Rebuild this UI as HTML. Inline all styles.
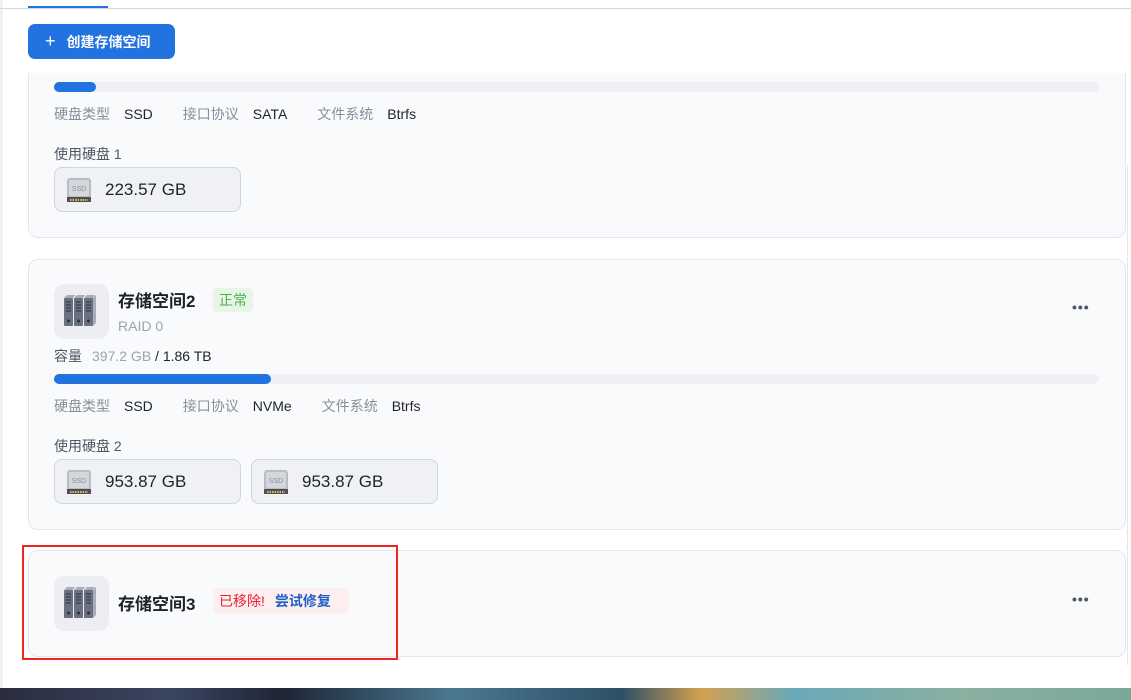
<!DOCTYPE html>
<html><head><meta charset="utf-8"><style>
*{box-sizing:border-box;margin:0;padding:0}
body{width:1131px;height:700px;overflow:hidden;background:#fff;font-family:"Liberation Sans","Noto Sans CJK SC",sans-serif;position:relative;color:#1f2329}
.abs{position:absolute}
.card{position:absolute;left:28px;width:1098px;background:#f9fafc;border:1px solid #e2e6ed;border-radius:10px}
.lbl{color:#86909c;font-size:14px}
.val{color:#1f2329;font-size:14px}
.bar{position:absolute;left:54px;width:1045px;height:10px;background:#eef0f3;border-radius:5px}
.bar i{display:block;height:10px;background:#2272e0;border-radius:5px}
.disk{position:absolute;width:187px;height:45px;background:#eff1f4;border:1px solid #d2d6dc;border-radius:8px}
.disk span{position:absolute;left:50px;top:12px;font-size:17px;color:#1f2329}
.ico{position:absolute;width:55px;height:55px;background:#eceef2;border-radius:10px}
.dots{position:absolute;font-size:14px;letter-spacing:1px;color:#4e5563;font-weight:bold}
.row span.val{margin-left:14px}
.row span.lbl{margin-left:30px}
.row span.lbl:first-child{margin-left:0}
</style></head><body>
<div class="abs" style="left:0;top:0;width:3px;height:700px;background:#eef1f5"></div>
<div class="abs" style="left:0;top:8px;width:1131px;height:1px;background:#cfd8e3"></div>
<div class="abs" style="left:28px;top:6px;width:80px;height:2px;background:#2272e0"></div>
<div class="abs" style="left:1127px;top:165px;width:1px;height:500px;background:#e2e6ed"></div>
<div class="abs" style="left:28px;top:24px;width:147px;height:35px;background:#2272e0;border-radius:7px;color:#fff;font-size:14px;font-weight:bold;line-height:35px;padding-left:17px"><span style="font-weight:normal;font-size:18px;margin-right:11px">+</span>创建存储空间</div>

<svg width="0" height="0" style="position:absolute"><defs>
<g id="ssd"><rect x="0" y="0" width="24" height="24" rx="3" fill="#b8bcc4"/><rect x="2" y="2" width="20" height="16" rx="2" fill="#d4d7dc"/><text x="12" y="13" font-size="7" text-anchor="middle" fill="#8a8f98" font-family="Liberation Sans">SSD</text><rect x="0" y="19" width="24" height="5" fill="#4b5060"/><path d="M3 22h18" stroke="#e8b93a" stroke-width="2" stroke-dasharray="1.5 1"/></g>
<g id="srv"><g fill="#6b7080"><rect x="0" y="4" width="9" height="28" rx="1"/><rect x="10" y="4" width="9" height="28" rx="1"/><rect x="20" y="4" width="9" height="28" rx="1"/></g><g fill="#a9adb8"><path d="M0 4l3-3h8l-2 3z"/><path d="M10 4l3-3h8l-2 3z"/><path d="M20 4l3-3h8l-2 3z"/><path d="M29 4l3-3v28l-3 3z"/></g><g stroke="#2b2f3a" stroke-width="1"><path d="M2 8h5M2 11h5M2 14h5M2 17h5M12 8h5M12 11h5M12 14h5M12 17h5M22 8h5M22 11h5M22 14h5M22 17h5"/></g><g fill="#2b2f3a"><circle cx="4.5" cy="27" r="1.5"/><circle cx="14.5" cy="27" r="1.5"/><circle cx="24.5" cy="27" r="1.5"/></g></g>
</defs></svg>

<div class="card" style="top:60px;height:178px;border-top:none;border-radius:0 0 10px 10px;clip-path:inset(13px -2px -2px -2px)"></div>
<div class="bar" style="top:82px"><i style="width:42px"></i></div>
<div class="abs row" style="left:54px;top:104px"><span class="lbl">硬盘类型</span><span class="val">SSD</span><span class="lbl">接口协议</span><span class="val">SATA</span><span class="lbl">文件系统</span><span class="val">Btrfs</span></div>
<div class="abs lbl" style="left:54px;top:144px;color:#4e5563">使用硬盘 1</div>
<div class="disk" style="left:54px;top:167px"><svg class="abs" style="left:12px;top:10px" width="24" height="24"><use href="#ssd"/></svg><span>223.57 GB</span></div>

<div class="card" style="top:259px;height:271px"></div>
<div class="ico" style="left:54px;top:284px"><svg class="abs" style="left:10px;top:10px" width="34" height="36"><use href="#srv"/></svg></div>
<div class="abs" style="left:118px;top:287px;font-size:17px;font-weight:bold">存储空间2</div>
<div class="abs" style="left:213px;top:288px;background:#e8f5e6;color:#4caf50;font-size:14px;padding:2px 6px;border-radius:4px">正常</div>
<div class="abs" style="left:118px;top:318px;font-size:14px;color:#9aa4b2">RAID 0</div>
<div class="dots" style="left:1072px;top:299px">•••</div>
<div class="abs" style="left:54px;top:346px;font-size:14px"><span style="color:#4e5563">容量</span><span style="color:#9aa4b2;margin-left:10px">397.2 GB</span> / 1.86 TB</div>
<div class="bar" style="top:374px"><i style="width:217px"></i></div>
<div class="abs row" style="left:54px;top:396px"><span class="lbl">硬盘类型</span><span class="val">SSD</span><span class="lbl">接口协议</span><span class="val">NVMe</span><span class="lbl">文件系统</span><span class="val">Btrfs</span></div>
<div class="abs lbl" style="left:54px;top:436px;color:#4e5563">使用硬盘 2</div>
<div class="disk" style="left:54px;top:459px"><svg class="abs" style="left:12px;top:10px" width="24" height="24"><use href="#ssd"/></svg><span>953.87 GB</span></div>
<div class="disk" style="left:251px;top:459px"><svg class="abs" style="left:12px;top:10px" width="24" height="24"><use href="#ssd"/></svg><span>953.87 GB</span></div>

<div class="card" style="top:550px;height:107px"></div>
<div class="ico" style="left:54px;top:576px"><svg class="abs" style="left:10px;top:10px" width="34" height="36"><use href="#srv"/></svg></div>
<div class="abs" style="left:118px;top:590px;font-size:17px;font-weight:bold">存储空间3</div>
<div class="abs" style="left:213px;top:588px;background:#fdeff0;font-size:14px;padding:3px 6px;border-radius:4px;width:136px;height:26px"><span style="color:#e8202e">已移除!</span><span style="color:#2060c8;font-weight:bold;margin-left:10px">尝试修复</span></div>
<div class="dots" style="left:1072px;top:591px">•••</div>
<div class="abs" style="left:22px;top:545px;width:376px;height:115px;border:2px solid #f0261e"></div>

<div class="abs" style="left:0;top:688px;width:1131px;height:12px;background:linear-gradient(90deg,#2a2d3e 0%,#3a4560 15%,#1e2535 25%,#4a7890 40%,#2d5068 55%,#d4a050 62%,#6aa8b8 70%,#8ab0a0 85%,#7aa898 100%)"></div>
</body></html>
